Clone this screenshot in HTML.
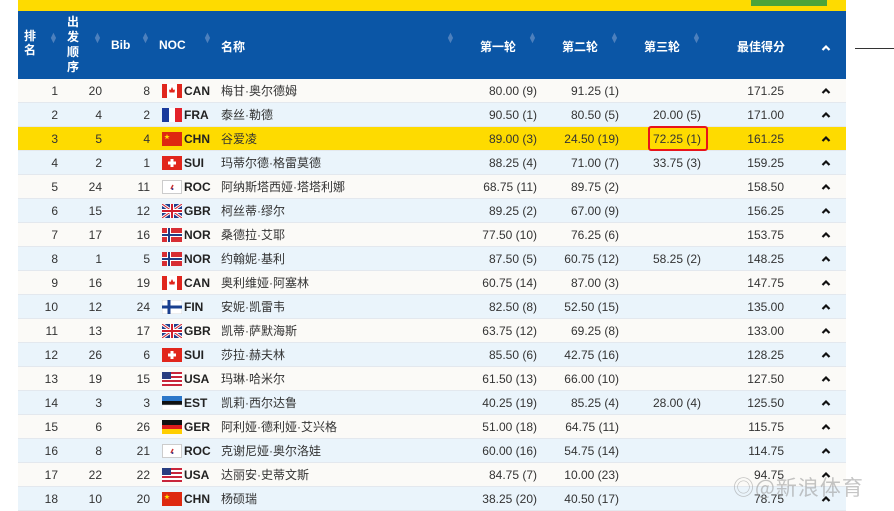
<!DOCTYPE html>
<html><head><meta charset="utf-8"><style>
*{margin:0;padding:0;box-sizing:border-box}
body{width:894px;height:508px;background:#fff;position:relative;overflow:hidden;font-family:"Liberation Sans","Noto Sans CJK SC",sans-serif;font-size:12px;color:#333}
.top{position:absolute;left:18px;top:0;width:828px;height:11px;background:#fedb00}
.btn{position:absolute;left:751px;top:0;width:76px;height:6px;background:#4ca43a}
.hd{position:absolute;left:18px;top:11px;width:828px;height:68px;background:#0b56a6;color:#fff;font-weight:bold;font-size:12px}
.hd div{position:absolute}
.s{color:#4d80bd;font-size:9px;line-height:5px;width:8px;text-align:center}
.row{position:absolute;left:18px;width:828px;height:24px;border-bottom:1px solid #e3e8ee}
.row div{position:absolute;top:0;line-height:24px;white-space:nowrap}
.r{text-align:right}
.flag{top:5px!important;width:20px;height:14px;line-height:0!important}
.car{top:8px!important;line-height:0!important}
.noc{font-weight:bold;color:#222}
</style></head><body>
<div class="top"></div><div class="btn"></div>
<div style="position:absolute;left:855px;top:48px;width:39px;height:1px;background:#333"></div>
<div class="hd">
<div style="left:6px;top:18px;width:14px;line-height:14px">排名</div>
<div class="s" style="left:31px;top:22px">▲<br>▼</div>
<div style="left:49px;top:4px;width:14px;line-height:15px">出发顺序</div>
<div class="s" style="left:75px;top:22px">▲<br>▼</div>
<div style="left:93px;top:27px">Bib</div>
<div class="s" style="left:123px;top:22px">▲<br>▼</div>
<div style="left:141px;top:27px">NOC</div>
<div class="s" style="left:185px;top:22px">▲<br>▼</div>
<div style="left:203px;top:27px">名称</div>
<div class="s" style="left:428px;top:22px">▲<br>▼</div>
<div style="left:462px;top:27px">第一轮</div>
<div class="s" style="left:510px;top:22px">▲<br>▼</div>
<div style="left:544px;top:27px">第二轮</div>
<div class="s" style="left:592px;top:22px">▲<br>▼</div>
<div style="left:626px;top:27px">第三轮</div>
<div class="s" style="left:674px;top:22px">▲<br>▼</div>
<div style="left:719px;top:27px">最佳得分</div>
<div style="left:803px;top:30px"><svg width="10" height="8"><path d="M1.5 6L5 2.5 8.5 6" stroke="#fff" stroke-width="2.2" fill="none"/></svg></div>
</div>
<div id="rows"></div>
<div style="position:absolute;left:648px;top:126px;width:60px;height:25px;border:2px solid #e8141b;border-radius:3px"></div>
<div style="position:absolute;left:733px;top:472px;font-size:21px;color:rgba(150,150,150,.55);font-family:'Noto Sans CJK SC',sans-serif;letter-spacing:1px">◎@新浪体育</div>
<script>
const F={
CAN:'<svg width="20" height="14"><rect width="20" height="14" fill="#fff"/><rect width="5" height="14" fill="#e0261d"/><rect x="15" width="5" height="14" fill="#e0261d"/><path d="M10 3l1.5 3 1.5-.5-.5 3H7.5l-.5-3 1.5.5z" fill="#e0261d"/></svg>',
FRA:'<svg width="20" height="14"><rect width="7" height="14" fill="#1a3a9c"/><rect x="7" width="6" height="14" fill="#fff"/><rect x="13" width="7" height="14" fill="#e3222b"/></svg>',
CHN:'<svg width="20" height="14"><rect width="20" height="14" fill="#de2910"/><text x="2" y="7" font-size="6" fill="#ffde00">★</text></svg>',
SUI:'<svg width="20" height="14"><rect width="20" height="14" fill="#e1261c"/><rect x="8.5" y="3" width="3" height="8" fill="#fff"/><rect x="6" y="5.5" width="8" height="3" fill="#fff"/></svg>',
ROC:'<svg width="20" height="14"><rect x=".5" y=".5" width="19" height="13" fill="#fff" stroke="#ccc"/><path d="M9 9l2-4" stroke="#c33" stroke-width="1.5"/><circle cx="10.5" cy="9" r="1" fill="#338"/></svg>',
GBR:'<svg width="20" height="14"><rect width="20" height="14" fill="#1f3d8c"/><path d="M0 0L20 14M20 0L0 14" stroke="#fff" stroke-width="3"/><path d="M0 0L20 14M20 0L0 14" stroke="#cf1f2e" stroke-width="1"/><path d="M10 0v14M0 7h20" stroke="#fff" stroke-width="4"/><path d="M10 0v14M0 7h20" stroke="#cf1f2e" stroke-width="2"/></svg>',
NOR:'<svg width="20" height="14"><rect width="20" height="14" fill="#d72d33"/><path d="M7 0v14M0 7h20" stroke="#fff" stroke-width="4"/><path d="M7 0v14M0 7h20" stroke="#1f3e86" stroke-width="2"/></svg>',
FIN:'<svg width="20" height="14"><rect width="20" height="14" fill="#fff" stroke="#ddd"/><path d="M7 0v14M0 7h20" stroke="#1a3f8f" stroke-width="3"/></svg>',
USA:'<svg width="20" height="14"><rect width="20" height="14" fill="#fff"/><path d="M0 1h20M0 5h20M0 9h20M0 13h20" stroke="#c9253a" stroke-width="2"/><rect width="9" height="7" fill="#283d80"/></svg>',
EST:'<svg width="20" height="14"><rect width="20" height="5" fill="#2c77c9"/><rect y="5" width="20" height="4" fill="#111"/><rect y="9" width="20" height="5" fill="#fff" stroke="#ddd" stroke-width=".5"/></svg>',
GER:'<svg width="20" height="14"><rect width="20" height="5" fill="#111"/><rect y="5" width="20" height="4" fill="#dd1c1c"/><rect y="9" width="20" height="5" fill="#ffce00"/></svg>'};
const D=[
[1,20,8,'CAN','梅甘·奥尔德姆','80.00 (9)','91.25 (1)','','171.25'],
[2,4,2,'FRA','泰丝·勒德','90.50 (1)','80.50 (5)','20.00 (5)','171.00'],
[3,5,4,'CHN','谷爱凌','89.00 (3)','24.50 (19)','72.25 (1)','161.25'],
[4,2,1,'SUI','玛蒂尔德·格雷莫德','88.25 (4)','71.00 (7)','33.75 (3)','159.25'],
[5,24,11,'ROC','阿纳斯塔西娅·塔塔利娜','68.75 (11)','89.75 (2)','','158.50'],
[6,15,12,'GBR','柯丝蒂·缪尔','89.25 (2)','67.00 (9)','','156.25'],
[7,17,16,'NOR','桑德拉·艾耶','77.50 (10)','76.25 (6)','','153.75'],
[8,1,5,'NOR','约翰妮·基利','87.50 (5)','60.75 (12)','58.25 (2)','148.25'],
[9,16,19,'CAN','奥利维娅·阿塞林','60.75 (14)','87.00 (3)','','147.75'],
[10,12,24,'FIN','安妮·凯雷韦','82.50 (8)','52.50 (15)','','135.00'],
[11,13,17,'GBR','凯蒂·萨默海斯','63.75 (12)','69.25 (8)','','133.00'],
[12,26,6,'SUI','莎拉·赫夫林','85.50 (6)','42.75 (16)','','128.25'],
[13,19,15,'USA','玛琳·哈米尔','61.50 (13)','66.00 (10)','','127.50'],
[14,3,3,'EST','凯莉·西尔达鲁','40.25 (19)','85.25 (4)','28.00 (4)','125.50'],
[15,6,26,'GER','阿利娅·德利娅·艾兴格','51.00 (18)','64.75 (11)','','115.75'],
[16,8,21,'ROC','克谢尼娅·奥尔洛娃','60.00 (16)','54.75 (14)','','114.75'],
[17,22,22,'USA','达丽安·史蒂文斯','84.75 (7)','10.00 (23)','','94.75'],
[18,10,20,'CHN','杨硕瑞','38.25 (20)','40.50 (17)','','78.75']];
let h='';
D.forEach((d,i)=>{
const bg=i==2?'#fedb00':(i%2?'#eaf4fb':'#fbfaf7');
h+=`<div class="row" style="top:${79+24*i}px;background:${bg}">
<div class="r" style="left:20px;width:20px">${d[0]}</div>
<div class="r" style="left:62px;width:22px">${d[1]}</div>
<div class="r" style="left:110px;width:22px">${d[2]}</div>
<div class="flag" style="left:144px">${F[d[3]]}</div>
<div class="noc" style="left:166px">${d[3]}</div>
<div style="left:203px">${d[4]}</div>
<div class="r" style="left:440px;width:79px">${d[5]}</div>
<div class="r" style="left:520px;width:81px">${d[6]}</div>
<div class="r" style="left:602px;width:81px">${d[7]}</div>
<div class="r" style="left:690px;width:76px">${d[8]}</div>
<div class="car" style="left:803px"><svg width="10" height="8"><path d="M1.5 6L5 2.5 8.5 6" stroke="#111" stroke-width="2.2" fill="none"/></svg></div></div>`;});
document.getElementById('rows').innerHTML=h;
</script>
</body></html>
